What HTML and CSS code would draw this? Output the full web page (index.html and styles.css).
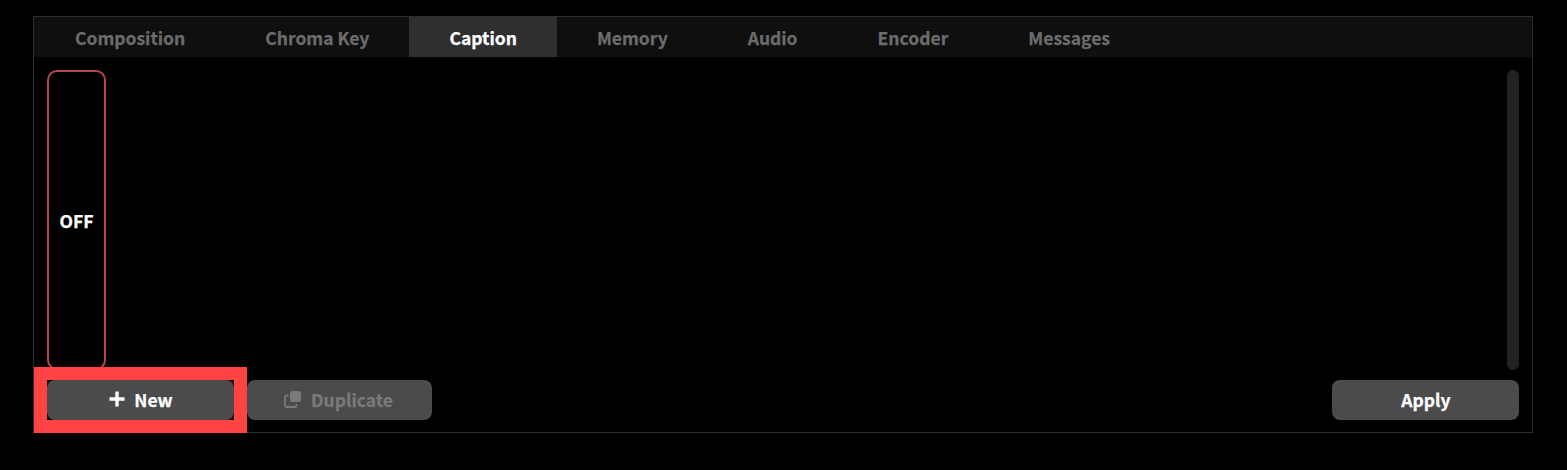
FILE: index.html
```html
<!DOCTYPE html>
<html lang="en">
<head>
    <meta charset="UTF-8">
    <title>Caption</title>
    <link rel="stylesheet" href="styles.css">
</head>
<body>
    <div class="panel">
        <div class="tabs">
            <div class="tab">Composition</div>
            <div class="tab">Chroma Key</div>
            <div class="tab active">Caption</div>
            <div class="tab">Memory</div>
            <div class="tab">Audio</div>
            <div class="tab">Encoder</div>
            <div class="tab">Messages</div>
        </div>
        <div class="content">
            <div class="list">
                <div class="card">OFF</div>
                <div class="scrollbar"></div>
            </div>
            <div class="actions">
                <button class="btn btn-new">
                    <svg class="icon" viewBox="0 0 16 16"><path d="M8 .5v15M.5 8h15" fill="none" stroke="#fff" stroke-width="3.4"/></svg>
                    New
                </button>
                <button class="btn btn-disabled">
                    <svg class="icon" viewBox="0 0 18 18">
                        <rect x="6" y="1" width="11" height="11" rx="2.5" fill="#7a7a7a"/>
                        <path d="M4.5 5.5H3A2 2 0 0 0 1 7.5V15a2 2 0 0 0 2 2h7.5a2 2 0 0 0 2-2v-1" fill="none" stroke="#7a7a7a" stroke-width="1.8"/>
                    </svg>
                    Duplicate
                </button>
                <button class="btn btn-apply">Apply</button>
            </div>
        </div>
        <div class="highlight"></div>
    </div>
</body>
</html>
```

FILE: styles.css
```css
body {
    margin: 0;
    background-color: #000;
    font-family: "Noto Sans CJK JP", "Noto Sans", sans-serif;
    font-weight: 700;
    -webkit-text-stroke: 0.25px;
    padding: 16px 0 0 33px;
}
.panel {
    position: relative;
    box-sizing: border-box;
    width: 1500px;
    height: 417px;
    border: 1px solid #2e2e2e;
}
.tabs {
    display: flex;
    height: 40px;
    padding-left: 1px;
    background-color: #0f0f0f;
}
.tab {
    padding: 0 40px;
    line-height: 41px;
    font-size: 17.5px;
    color: #6c6c6c;
}
.tab.active {
    background-color: #2f2f2f;
    color: #fff;
}
.content {
    padding: 13px;
}
.list {
    display: flex;
    justify-content: space-between;
    height: 300px;
}
.card {
    box-sizing: border-box;
    width: 59px;
    height: 300px;
    border: 2px solid #b5474f;
    border-radius: 10px;
    display: flex;
    align-items: center;
    justify-content: center;
    color: #fff;
    font-size: 17.5px;
}
.scrollbar {
    width: 12px;
    background-color: #222;
    border-radius: 6px;
}
.actions {
    display: flex;
    gap: 13px;
    margin-top: 10px;
}
.btn {
    display: flex;
    align-items: center;
    justify-content: center;
    gap: 9px;
    height: 40px;
    width: 187px;
    border: none;
    border-radius: 8px;
    background-color: #4b4b4b;
    color: #fff;
    font-family: inherit;
    font-weight: 700;
    font-size: 17.5px;
    padding: 0 0 2px 1px;
}
.btn-disabled {
    width: 185px;
    padding: 0 2px 2px 0;
    color: #7a7a7a;
}
.btn-apply {
    margin-left: auto;
}
.icon {
    width: 16px;
    height: 16px;
}
.btn-disabled .icon {
    width: 18px;
    height: 18px;
}
.highlight {
    position: absolute;
    left: 0;
    top: 350px;
    box-sizing: border-box;
    width: 213px;
    height: 66px;
    border: 13px solid #ff4343;
}
```
